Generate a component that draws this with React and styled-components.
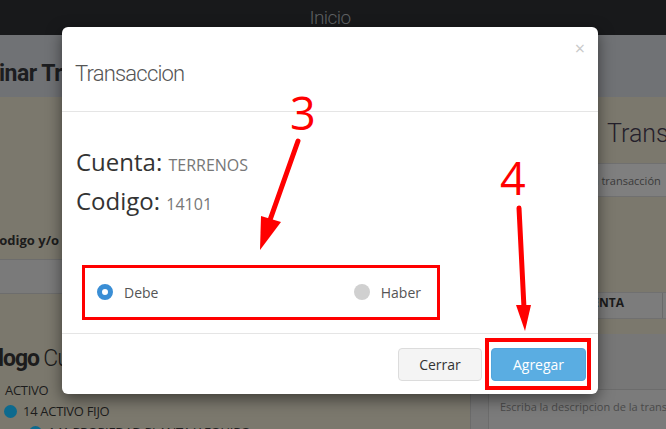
import React from "react";
import styled, { createGlobalStyle } from "styled-components";

const GlobalStyle = createGlobalStyle`
  html, body {
    margin: 0;
    padding: 0;
  }
  body {
    font-family: "Open Sans", "Noto Sans", sans-serif;
    background: #7b786d;
  }
`;

const App = () => {
  return (
    <>
      <GlobalStyle />
      <Page>
        <TopBar>Inicio</TopBar>
        <Band>
          <BandTitle>Eliminar Transacciones</BandTitle>
        </Band>
        <Columns>
          <LeftCol>
            <FieldLabel>Codigo y/o cuenta</FieldLabel>
            <SearchBand />
            <CatalogTitle>
              <b>Catalogo</b> Cuentas
            </CatalogTitle>
            <TreeRoot>ACTIVO</TreeRoot>
            <TreeItem>
              <Dot />
              14 ACTIVO FIJO
            </TreeItem>
            <TreeItem $sub>
              <Marker />
              <Dot />
              141 PROPIEDAD PLANTA Y EQUIPO
            </TreeItem>
          </LeftCol>
          <RightCol>
            <PanelTitle>Transacciones</PanelTitle>
            <InputBox>Descripcion de la transacción</InputBox>
            <TableHead>
              <HeadCell>CUENTA</HeadCell>
              <HeadCell />
            </TableHead>
            <NotePanel>
              <NoteArea>Escriba la descripcion de la transaccion</NoteArea>
            </NotePanel>
          </RightCol>
        </Columns>

        <Modal>
          <ModalHeader>
            <ModalTitle>Transaccion</ModalTitle>
            <Close>×</Close>
          </ModalHeader>
          <ModalBody>
            <InfoLine>
              Cuenta: <InfoValue>TERRENOS</InfoValue>
            </InfoLine>
            <InfoLine>
              Codigo: <InfoValue>14101</InfoValue>
            </InfoLine>
            <RadioRow>
              <RadioOption>
                <RadioMark $checked />
                Debe
              </RadioOption>
              <RadioOption>
                <RadioMark />
                Haber
              </RadioOption>
            </RadioRow>
          </ModalBody>
          <ModalFooter>
            <Button>Cerrar</Button>
            <Button $primary>Agregar</Button>
          </ModalFooter>
        </Modal>

        <StepNumber style={{ left: 290, top: 90 }}>3</StepNumber>
        <StepNumber style={{ left: 500, top: 155 }}>4</StepNumber>
        <Highlight style={{ left: 82, top: 265, width: 358, height: 55 }} />
        <Highlight
          $thick
          style={{ left: 485, top: 338, width: 106, height: 52 }}
        />
        <Arrows width="666" height="429" viewBox="0 0 666 429">
          <line x1="298" y1="141" x2="270" y2="220" />
          <polygon points="260,250 261,216 281,222" />
          <line x1="519" y1="208" x2="524" y2="308" />
          <polygon points="516,305 531,305 525,331" />
        </Arrows>
      </Page>
    </>
  );
};

const Page = styled.div`
  position: relative;
  width: 666px;
  height: 429px;
  overflow: hidden;
  background: #7b786d;
`;

const TopBar = styled.header`
  height: 35px;
  background: #18191b;
  display: flex;
  justify-content: center;
  align-items: center;
  padding-right: 6px;
  color: #5f6163;
  font-family: Roboto, sans-serif;
  font-weight: 300;
  font-size: 19px;
  letter-spacing: -0.6px;
`;

const Band = styled.div`
  height: 62px;
  background: #707275;
  display: flex;
  align-items: flex-end;
  padding-bottom: 10px;
  box-sizing: border-box;
`;

const BandTitle = styled.h2`
  margin: 0 0 0 -44px;
  font-family: Roboto, sans-serif;
  font-weight: 700;
  font-size: 23px;
  letter-spacing: -0.5px;
  color: #1c1d20;
  white-space: nowrap;
`;

const Columns = styled.div`
  display: flex;
  height: 332px;
`;

const LeftCol = styled.div`
  flex: none;
  width: 470px;
  display: flex;
  flex-direction: column;
  padding-top: 135px;
  box-sizing: border-box;

  & > * {
    flex-shrink: 0;
  }
`;

const FieldLabel = styled.div`
  margin-left: -9px;
  font-size: 13px;
  font-weight: 700;
  color: #1c1c1c;
  line-height: 16px;
`;

const SearchBand = styled.div`
  margin-top: 11px;
  height: 33px;
  background: #7a7a7a;
  border-top: 1px solid #6d6d6d;
  border-bottom: 1px solid #6d6d6d;
`;

const CatalogTitle = styled.div`
  margin: 50px 0 0 -45px;
  font-family: Roboto, sans-serif;
  font-weight: 300;
  font-size: 23px;
  letter-spacing: -1.1px;
  line-height: 30px;
  color: #1c1c1c;
  white-space: nowrap;

  b {
    font-weight: 700;
  }
`;

const TreeRoot = styled.div`
  margin: 7px 0 0 5px;
  font-size: 13px;
  line-height: 18px;
  color: #1c1c1c;
  letter-spacing: -0.3px;
`;

const TreeItem = styled.div`
  display: flex;
  align-items: center;
  gap: 6px;
  margin: 3px 0 0 ${(p) => (p.$sub ? "7px" : "4px")};
  font-size: 13px;
  line-height: 18px;
  color: #1c1c1c;
  letter-spacing: -0.3px;
  white-space: nowrap;
`;

const Dot = styled.span`
  width: 13px;
  height: 13px;
  border-radius: 50%;
  background: #0d6a8e;
  flex: none;
`;

const Marker = styled.span`
  width: 4px;
  height: 8px;
  margin: 6px 12px 0 0;
  background: #3d7a2e;
  flex: none;
`;

const RightCol = styled.div`
  flex: 1;
  min-width: 0;
  display: flex;
  flex-direction: column;

  & > * {
    flex-shrink: 0;
  }
`;

const PanelTitle = styled.div`
  padding: 22px 0 0 137px;
  font-family: Roboto, sans-serif;
  font-weight: 300;
  font-size: 25px;
  line-height: 30px;
  color: #24202b;
  white-space: nowrap;
`;

const InputBox = styled.div`
  margin: 14px 0 0 18px;
  height: 34px;
  box-sizing: border-box;
  padding: 9px 0 0 22px;
  background: #7f7f7f;
  border: 1px solid #707070;
  border-right: none;
  font-size: 11px;
  color: #3a3a3a;
  white-space: nowrap;
  overflow: hidden;
`;

const TableHead = styled.div`
  display: flex;
  margin: 95px 0 0 18px;
  height: 25px;
  background: #7c7c7c;
  border-top: 1px solid #707070;
  border-bottom: 1px solid #707070;
`;

const HeadCell = styled.div`
  flex: ${(p) => (p.children ? "none" : "1")};
  width: 175px;
  border-right: 1px solid #6a6a6a;
  padding: 1px 38px 0 0;
  font-size: 12px;
  font-weight: 700;
  line-height: 18px;
  color: #1a1a1a;
  text-align: right;
  box-sizing: border-box;
`;

const NotePanel = styled.div`
  margin-top: 15px;
  flex: 1;
  background: #777777;
  border-left: 1px solid #6b6b6b;
  padding: 55px 0 0 17px;
`;

const NoteArea = styled.div`
  height: 60px;
  background: #7b7b7b;
  border-top: 1px solid #6c6c6c;
  border-left: 1px solid #6c6c6c;
  padding: 9px 0 0 11px;
  font-size: 11px;
  color: #4a4a4a;
  white-space: nowrap;
  overflow: hidden;
`;

const Modal = styled.div`
  position: absolute;
  left: 62px;
  top: 27px;
  width: 536px;
  background: #fff;
  border-radius: 6px;
  box-shadow: 0 5px 15px rgba(0, 0, 0, 0.5);
  display: flex;
  flex-direction: column;
`;

const ModalHeader = styled.div`
  position: relative;
  height: 85px;
  box-sizing: border-box;
  padding: 29px 13px 0;
  border-bottom: 1px solid #e5e5e5;
`;

const ModalTitle = styled.h4`
  margin: 0;
  font-family: Roboto, sans-serif;
  font-weight: 300;
  font-size: 22px;
  letter-spacing: -0.8px;
  line-height: 36px;
  color: #555;
`;

const Close = styled.span`
  position: absolute;
  right: 13px;
  top: 9px;
  font-size: 18px;
  color: #c9c9c9;
`;

const ModalBody = styled.div`
  height: 221px;
  box-sizing: border-box;
  padding: 30px 14px 0;
`;

const InfoLine = styled.div`
  font-size: 24px;
  line-height: 39px;
  color: #333;
`;

const InfoValue = styled.span`
  font-size: 16px;
  line-height: 1;
  color: #777;
`;

const RadioRow = styled.div`
  display: flex;
  justify-content: space-between;
  width: 324px;
  margin: 62px 0 0 21px;
  height: 20px;
`;

const RadioOption = styled.label`
  display: flex;
  align-items: center;
  gap: 11px;
  font-size: 14px;
  color: #555;
`;

const RadioMark = styled.span`
  width: 16px;
  height: 16px;
  box-sizing: border-box;
  border-radius: 50%;
  background: ${(p) => (p.$checked ? "#fff" : "#d0d0d0")};
  border: ${(p) => (p.$checked ? "5px solid #3a8ed5" : "none")};
`;

const ModalFooter = styled.div`
  display: flex;
  justify-content: flex-end;
  gap: 9px;
  padding: 14px 12px 13px;
  border-top: 1px solid #e5e5e5;
`;

const Button = styled.button`
  height: 33px;
  padding: 0 20px;
  min-width: ${(p) => (p.$primary ? "95px" : "84px")};
  border-radius: 4px;
  border: 1px solid ${(p) => (p.$primary ? "#52a5dc" : "#dcdcdc")};
  background: ${(p) => (p.$primary ? "#5aade2" : "#f4f4f4")};
  color: ${(p) => (p.$primary ? "#fff" : "#333")};
  font-family: "Open Sans", sans-serif;
  font-size: 14px;
`;

const StepNumber = styled.span`
  position: absolute;
  font-family: "Open Sans", sans-serif;
  font-size: 45px;
  line-height: 1;
  color: #ff0000;
`;

const Highlight = styled.div`
  position: absolute;
  box-sizing: border-box;
  border: ${(p) => (p.$thick ? "4px" : "3px")} solid #ff0000;
`;

const Arrows = styled.svg`
  position: absolute;
  left: 0;
  top: 0;
  pointer-events: none;

  line {
    stroke: #ff0000;
    stroke-width: 5;
    stroke-linecap: round;
  }
  polygon {
    fill: #ff0000;
  }
`;

export default App;
